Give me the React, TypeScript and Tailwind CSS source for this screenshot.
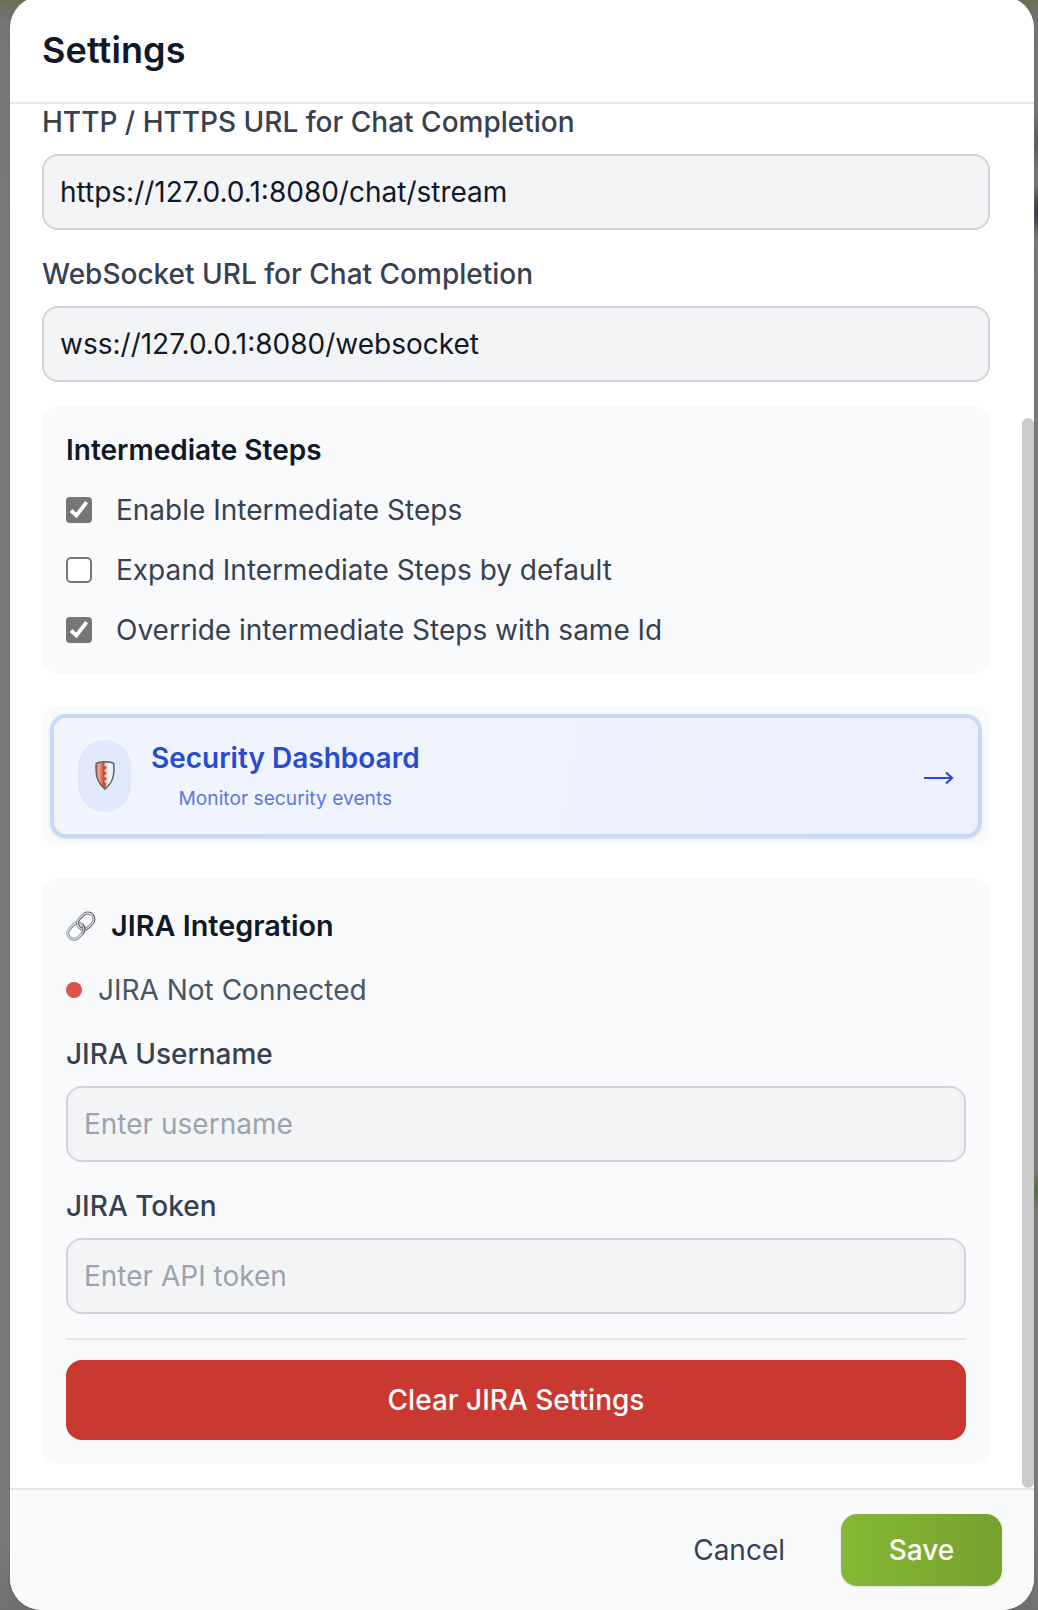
import React from "react";

function Field({ label, value, placeholder }: { label: string; value?: string; placeholder?: string }) {
  return (
    <label className="flex flex-col gap-3">
      <span className="text-[28px] leading-10 font-medium text-[#374151]">{label}</span>
      <input
        className="h-[76px] w-full rounded-2xl border-2 border-[#d1d5db] bg-[#f3f4f6] px-4 text-[28px] text-[#111827] outline-none placeholder:text-[#9ca3af]"
        defaultValue={value}
        placeholder={placeholder}
      />
    </label>
  );
}

function Check({ label, checked }: { label: string; checked: boolean }) {
  return (
    <div className="flex h-10 items-center gap-6">
      {checked ? (
        <svg width="26" height="26" viewBox="0 0 26 26">
          <rect width="26" height="26" rx="4" fill="#767676" />
          <path d="M5 13.5 10.400 18.500 20.600 5.200" fill="none" stroke="#fff" strokeWidth="3.800" />
        </svg>
      ) : (
        <span className="size-[26px] rounded-[5px] border-2 border-[#767676] bg-white" />
      )}
      <span className="text-[28px] leading-10 text-[#374151]">{label}</span>
    </div>
  );
}

function ShieldIcon() {
  return (
    <svg className="-mt-0.5" width="20" height="29" viewBox="0 0 20 29">
      <defs>
        <linearGradient id="shieldRed" x1="0" x2="1">
          <stop offset="0" stopColor="#d9695a" />
          <stop offset="0.45" stopColor="#f3a196" />
          <stop offset="0.85" stopColor="#dd6a55" />
        </linearGradient>
        <linearGradient id="shieldSilver" x1="0" x2="1">
          <stop offset="0" stopColor="#b4b6b7" />
          <stop offset="0.6" stopColor="#f7f8f8" />
          <stop offset="1" stopColor="#dfe0e0" />
        </linearGradient>
      </defs>
      <path d="M8 1C5 1.200 2.500 1.700 1.200 2.600 .4 13 1.500 21 8 26.500Z" fill="url(#shieldRed)" />
      <path d="M8 1c5-.5 9 .7 10.800 1.600C19.600 13 18.500 21 10 28l-2-1.500Z" fill="url(#shieldSilver)" />
      <path d="M7.500 1.500H10L8.800 4.200l3.200 2.300-3.200 2.900 3.200 2.700-3.200 2.900 3.200 2.700-3.200 2.900 2.600 2.200L10 27.500l-2.500-2Z" fill="#c3503b" />
      <path d="M10 .8C7 .8 3 1.300 1.200 2.600 .4 13 1.500 21 10 28c8.500-7 9.600-15 8.800-25.400C17 1.300 13 .8 10 .8Z" fill="none" stroke="#625e5b" strokeWidth="1.400" />
    </svg>
  );
}

function LinkIcon() {
  return (
    <svg className="-mr-px" width="30" height="30" viewBox="0 0 30 30" fill="none">
      <g transform="rotate(-45 15 15)">
        <rect x="-1.200" y="8.800" width="18" height="12.400" rx="6.200" stroke="#6f747c" strokeWidth="2.800" />
        <rect x="-1.300" y="8.600" width="18" height="12.400" rx="6.200" stroke="#d5deea" strokeWidth="1.500" />
        <rect x="12.800" y="8.800" width="18" height="12.400" rx="6.200" stroke="#514a49" strokeWidth="2.800" />
        <rect x="12.600" y="8.600" width="18" height="12.400" rx="6.200" stroke="#d5deea" strokeWidth="1.500" />
        <path d="M10.600 21.200a6.200 6.200 0 0 0 6.200-6.200" stroke="#4f4b4b" strokeWidth="2.800" />
        <path d="M10.400 21a6.200 6.200 0 0 0 6.200-6.200" stroke="#c3ccd8" strokeWidth="1.400" />
      </g>
    </svg>
  );
}

export default function App() {
  return (
    <div className="h-[1610px] w-[1038px] overflow-hidden bg-[radial-gradient(ellipse_10px_28px_at_1038px_211px,#41434a_20%,transparent),radial-gradient(ellipse_10px_30px_at_1038px_142px,#5b5d61_10%,transparent),radial-gradient(ellipse_9px_20px_at_1037px_1190px,#5d6b45_10%,transparent),linear-gradient(180deg,#6c6f58_0px,#757776_24px,#7a7b7a_300px,#7b7b7b_1530px,#6e7072_1610px)] pr-1 pl-2.5 font-[Inter,sans-serif]">
      <div className="-mt-1 flex h-[1614px] flex-col overflow-hidden rounded-[32px] bg-white shadow-[0_0_12px_rgba(0,0,0,0.05)]">
        <header className="flex h-[108px] shrink-0 items-center border-b-2 border-[#e5e7eb] px-8 pt-0.5">
          <h1 className="text-[36px] leading-[48px] font-semibold tracking-[0.1px] text-[#111827]">Settings</h1>
        </header>

        <div className="flex h-[1384px] shrink-0 overflow-hidden">
          <main className="-mt-0.5 w-[980px] pl-8">
            <div className="flex flex-col gap-6">
              <Field label="HTTP / HTTPS URL for Chat Completion" value="https://127.0.0.1:8080/chat/stream" />
              <Field label="WebSocket URL for Chat Completion" value="wss://127.0.0.1:8080/websocket" />
            </div>

            <section className="mt-6 flex flex-col gap-5 rounded-2xl bg-[#f9fafc] p-6">
              <h2 className="text-[28px] leading-10 font-semibold text-[#111827]">Intermediate Steps</h2>
              <Check label="Enable Intermediate Steps" checked />
              <Check label="Expand Intermediate Steps by default" checked={false} />
              <Check label="Override intermediate Steps with same Id" checked />
            </section>

            <section className="mt-8 rounded-2xl bg-[#f9fafc] p-2">
              <button className="flex h-[124px] w-full items-center rounded-2xl border-4 border-[#c3dafb] bg-[linear-gradient(100deg,#f0f5fe,#eff3fe_55%,#eef0fd)] px-6 shadow-sm">
                <span className="flex h-[72px] w-[53px] items-center justify-center rounded-full bg-[#dfe9fb]">
                  <ShieldIcon />
                </span>
                <span className="ml-5 flex flex-col items-center">
                  <span className="text-[28px] leading-10 font-semibold text-[#284bcf]">Security Dashboard</span>
                  <span className="mt-1 text-[19.2px] leading-8 text-[#5b78de]">Monitor security events</span>
                </span>
                <svg className="mt-1 ml-auto" width="30" height="14" viewBox="0 0 30 14">
                  <path d="M0 7H27" stroke="#284bcf" strokeWidth="2" />
                  <path d="m22 1.500 6 5.500-6 5.500" fill="none" stroke="#284bcf" strokeWidth="2.200" />
                </svg>
              </button>
            </section>

            <section className="mt-8 rounded-2xl bg-[#f9fafc] p-6">
              <h2 className="flex h-12 items-center gap-4 text-[28.8px] leading-10 font-semibold text-[#111827]">
                <LinkIcon />
                JIRA Integration
              </h2>
              <div className="mt-5 mb-6 flex items-center gap-4 text-[28px] leading-10 text-[#4b5563]">
                <span className="size-4 rounded-full bg-[#de524c]" />
                JIRA Not Connected
              </div>
              <div className="flex flex-col gap-6">
                <Field label="JIRA Username" placeholder="Enter username" />
                <Field label="JIRA Token" placeholder="Enter API token" />
              </div>
              <div className="mt-6 border-t-2 border-[#e5e7eb] pt-5">
                <button className="h-20 w-full rounded-2xl bg-[#c93831] text-[28px] font-medium text-white">
                  Clear JIRA Settings
                </button>
              </div>
            </section>
          </main>
          <div className="mt-[314px] ml-auto h-[1070px] w-3 rounded-full bg-[#cbcbcb]" />
        </div>

        <footer className="flex h-[126px] shrink-0 items-start justify-end border-t-2 border-[#e5e7eb] bg-[#f9fafc] px-8 pt-6">
          <button className="mr-2 h-[72px] px-12 text-[28px] text-[#374151]">Cancel</button>
          <button className="h-[72px] w-[161px] rounded-2xl bg-linear-to-r from-[#86b936] to-[#76a22e] text-[28px] font-medium text-white shadow-sm">
            Save
          </button>
        </footer>
      </div>
    </div>
  );
}
